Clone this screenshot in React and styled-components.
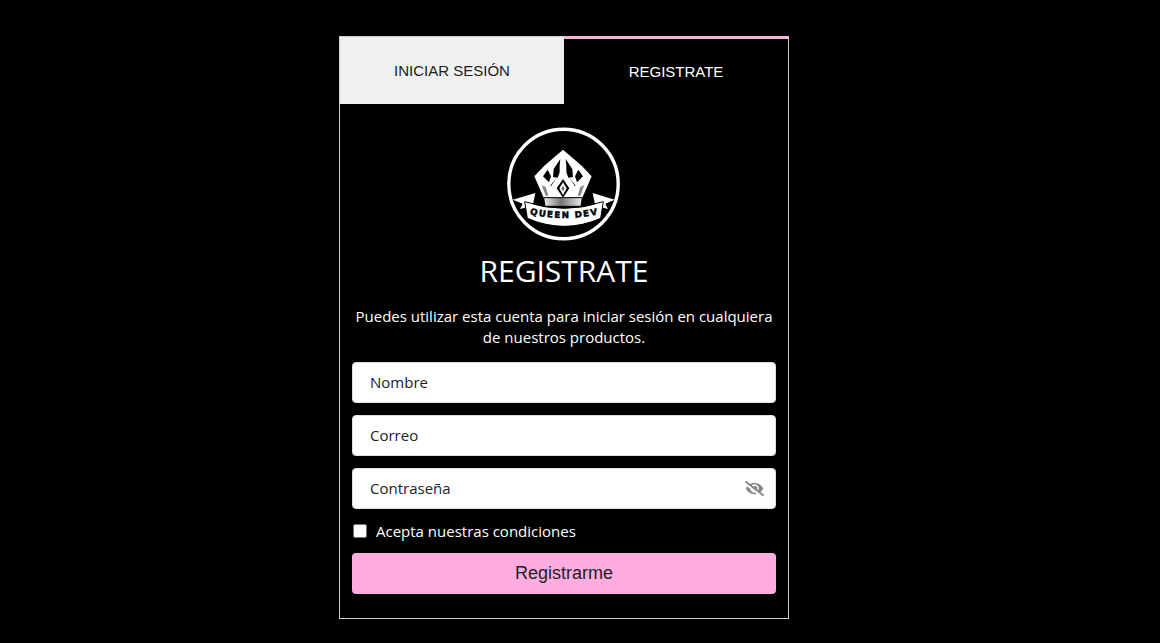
import React from 'react';
import styled, { createGlobalStyle } from 'styled-components';
import { FaEyeSlash } from 'react-icons/fa';

const GlobalStyle = createGlobalStyle`
    * {
        box-sizing: border-box;
    }

    body {
        margin: 0;
        background: #000;
        font-family: "Open Sans", "Liberation Sans", sans-serif;
    }
`;

const Page = styled.div`
    display: flex;
    justify-content: center;
    padding: 36px 32px 0 0;
    min-height: 100vh;
`;

const Card = styled.section`
    width: 450px;
    height: 583px;
    border: 1px solid #ccc;
    border-top: 0;
    background: #000;
`;

// Tabs
const Tabs = styled.div`
    display: flex;
    height: 68px;
`;

const Tab = styled.button`
    flex: 1;
    border: 0;
    border-top: ${props => (props.active ? '3px solid #f4b3d8' : '1px solid #ccc')};
    background: ${props => (props.active ? '#000' : '#f0f0f0')};
    color: ${props => (props.active ? '#fff' : '#222')};
    font-family: "Liberation Sans", Arial, sans-serif;
    font-size: 15px;
    padding: 0;
`;

// Form
const Body = styled.div`
    display: flex;
    flex-direction: column;
    align-items: center;
    padding: 24px 12px 0;
`;

const Title = styled.h1`
    margin: 9px 0 0;
    font-size: 30px;
    line-height: 42px;
    font-weight: 400;
    color: #fff;
`;

const Description = styled.p`
    margin: 14px 0 0;
    font-size: 15px;
    line-height: 21px;
    color: #fff;
    text-align: center;
`;

const Form = styled.form`
    align-self: stretch;
    display: flex;
    flex-direction: column;
    gap: 12px;
    margin-top: 14px;
`;

const Field = styled.div`
    position: relative;
    height: 41px;
`;

const Input = styled.input`
    width: 100%;
    height: 100%;
    border: 1px solid #ddd;
    border-radius: 4px;
    background: #fff;
    padding: 0 17px 2px;
    font-family: inherit;
    font-size: 15px;
    color: #222;
    &::placeholder {
        color: #222;
        opacity: 1;
    }
`;

const EyeButton = styled.span`
    position: absolute;
    top: 11px;
    right: 12px;
    display: flex;
    color: #888;
    font-size: 19px;
`;

const CheckRow = styled.label`
    display: flex;
    align-items: center;
    gap: 9px;
    height: 20px;
    font-size: 15px;
    color: #fff;
`;

const Check = styled.input`
    width: 14px;
    height: 14px;
    margin: 0 0 0 1px;
    accent-color: #fff;
`;

const Submit = styled.button`
    height: 41px;
    border: 0;
    border-radius: 4px;
    background: #ffade0;
    color: #222;
    font-family: "Liberation Sans", Arial, sans-serif;
    font-size: 18px;
`;

const Logo = () => (
    <svg width="114" height="114" viewBox="0 0 114 114" style={{ display: 'block', marginTop: -1 }}>
        <defs>
            <linearGradient id="band" x1="0" x2="1" y1="0" y2="0">
                <stop offset="0" stopColor="#eee" />
                <stop offset="0.45" stopColor="#777" />
                <stop offset="1" stopColor="#eee" />
            </linearGradient>
        </defs>
        <circle cx="56.5" cy="57" r="54.7" fill="#000" stroke="#fff" strokeWidth="3.4" />
        {/* crown */}
        <g transform="translate(18 18) scale(0.3333)">
            <path d="M114 14 L170 62 L200 94 L172 158 L56 158 L28 94 L58 62 Z" fill="#fff" />
            <path d="M106 42 L86 72 L84 96 L98 98 L104 82 L104 62 Z" fill="#000" />
            <path d="M122 42 L142 72 L144 96 L130 98 L124 82 L124 62 Z" fill="#000" />
            <path d="M68 74 L54 94 L72 112 L78 94 Z" fill="#000" />
            <path d="M160 74 L174 94 L156 112 L150 94 Z" fill="#000" />
            <path d="M96 96 L78 124 L60 112 L76 122 Z" fill="#000" />
            <path d="M132 96 L150 124 L168 112 L152 122 Z" fill="#000" />
            <path d="M114 102 L95 130 L114 158 L133 130 Z" fill="#000" />
            <path d="M114 112 L103 130 L114 150 L125 130 Z" fill="#fff" />
            <path d="M114 122 L110 130 L114 140 L118 130 Z" fill="#666" />
            <path d="M50 120 L62 152 L70 152 L62 126 Z" fill="#888" />
            <path d="M178 120 L166 152 L158 152 L166 126 Z" fill="#888" />
            <path d="M56 158 L172 158 L168 184 L60 184 Z" fill="url(#band)" stroke="#000" strokeWidth="3" />
        </g>
        {/* ribbon */}
        <g transform="translate(-1 58) scale(0.3333)">
            <path d="M20 44 L88 24 L80 62 L42 72 L50 56 Z" fill="#fff" />
            <path d="M326 44 L260 24 L268 62 L306 72 L298 56 Z" fill="#fff" />
            <path
                d="M56 50 Q175 90 292 50 L284 100 Q175 148 64 100 Z"
                fill="#fff"
                stroke="#000"
                strokeWidth="3"
            />
            <path id="ribbon" d="M60 85 Q175 113 290 85" fill="none" />
            <text
                fontFamily="'DejaVu Sans', sans-serif"
                fontSize="26"
                fontWeight="700"
                fill="#000"
                stroke="#000"
                strokeWidth="1.5"
                textAnchor="middle"
                letterSpacing="4.5"
            >
                <textPath href="#ribbon" startOffset="50%">QUEEN DEV</textPath>
            </text>
        </g>
    </svg>
);

function App() {
    return (
        <>
            <GlobalStyle />
            <Page>
                <Card>
                    <Tabs>
                        <Tab>INICIAR SESIÓN</Tab>
                        <Tab active>REGISTRATE</Tab>
                    </Tabs>
                    <Body>
                        <Logo />
                        <Title>REGISTRATE</Title>
                        <Description>
                            Puedes utilizar esta cuenta para iniciar sesión en cualquiera de nuestros productos.
                        </Description>
                        <Form>
                            <Field>
                                <Input placeholder="Nombre" />
                            </Field>
                            <Field>
                                <Input placeholder="Correo" />
                            </Field>
                            <Field>
                                <Input placeholder="Contraseña" type="password" />
                                <EyeButton>
                                    <FaEyeSlash />
                                </EyeButton>
                            </Field>
                            <CheckRow>
                                <Check type="checkbox" />
                                Acepta nuestras condiciones
                            </CheckRow>
                            <Submit type="button">Registrarme</Submit>
                        </Form>
                    </Body>
                </Card>
            </Page>
        </>
    );
}

export default App;
